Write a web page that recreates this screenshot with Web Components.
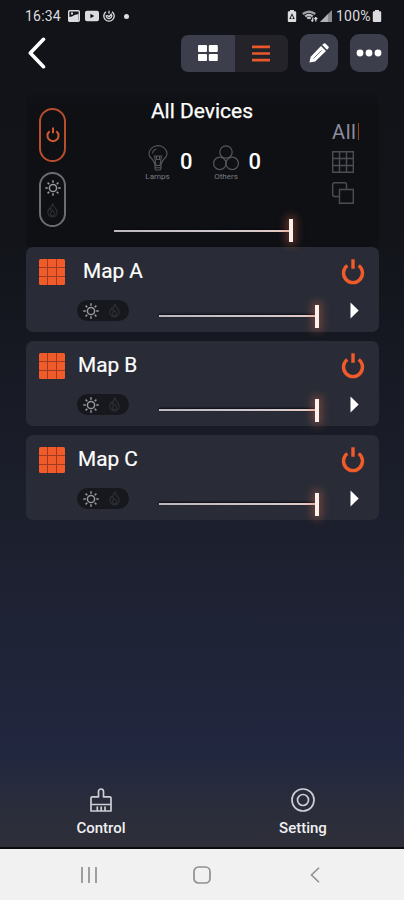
<!DOCTYPE html>
<html lang="en">
<head>
<meta charset="utf-8">
<meta name="viewport" content="width=device-width, initial-scale=1">
<title>All Devices</title>
<style>
	html, body {
		margin: 0;
		height: 100%;
	}

	body {
		overflow: hidden;
		background: #111217;
		color: #fff;
		font-family: Roboto, 'Noto Sans', sans-serif;
	}
</style>
</head>
<body>
<light-app>
	<status-bar slot="top" time="16:34" battery="100%"></status-bar>
	<tool-bar slot="top"></tool-bar>
	<device-summary lamps="0" others="0">All Devices</device-summary>
	<map-card style="--indent: 18px">Map A</map-card>
	<map-card>Map B</map-card>
	<map-card>Map C</map-card>
	<tab-bar slot="bottom">
		<tab-item icon="brush">Control</tab-item>
		<tab-item icon="target">Setting</tab-item>
	</tab-bar>
	<system-nav slot="bottom"></system-nav>
</light-app>

<script>
/**
 * Icon markup by name: [viewBox, content].
 */
const icons = {
	picture: ['0 0 12 12', '<rect x=".7" y=".7" width="10.6" height="10.6" rx="1" fill="none" stroke="currentColor" stroke-width="1.4"/><path fill="currentColor" d="M1 11V7l3-.5L6.5 5l4-1v7zM3 2.5h2v2H3z"/>'],
	video: ['0 0 14 12', '<path fill="currentColor" fill-rule="evenodd" d="M2 .8h10q2 0 2 2v6.4q0 2-2 2H2q-2 0-2-2V2.800q0-2 2-2zm3.400 3v4.400L9.300 6z"/>'],
	swirl: ['0 0 12 12', '<g fill="none" stroke="currentColor" stroke-width="1.3"><path d="M3 1.7a5.2 5.2 0 1 0 6 0"/><path d="M6 .8v3M3.3 5a2.8 2.8 0 1 0 5.4 0M4.3 5.2L6 6.8l2.8-3"/></g>'],
	recycle: ['0 0 10 12', '<path fill="currentColor" fill-rule="evenodd" d="M3 0h4v1.2h1.2q1 0 1 1V11q0 1-1 1H1.8q-1 0-1-1V2.2q0-1 1-1H3zm2 3.3L2.3 8.9h2v-1h-.6L5 5.3l1.3 2.6h-.8v1h2.2z"/>'],
	wifi: ['0 0 16 12', '<g fill="none" stroke="currentColor"><path stroke-width="2.4" opacity=".7" d="M.8 4Q7 -.6 13.2 4"/><path stroke-width="2.2" opacity=".85" d="M3.2 6.3Q7 3.4 10.7 6.3M5.2 8.5Q7 7 8.8 8.5"/><path stroke-width="1.2" d="M10.8 7.5v3.8M9.3 10l1.5 1.6M13.8 11.5V7.6M12.4 9l1.4-1.5L15.3 9"/></g>'],
	signal: ['0 0 12 12', '<path fill="currentColor" opacity=".6" d="M0 12L12 0v12z"/><path fill="currentColor" opacity=".5" d="M0 12l8-8v8z"/>'],
	battery: ['0 0 10 12', '<path fill="currentColor" d="M3 0h4v1.3h1.2q1 0 1 1V11q0 1-1 1H1.8q-1 0-1-1V2.3q0-1 1-1H3z"/>'],
	back: ['0 0 18 32', '<path fill="none" stroke="currentColor" stroke-width="3.6" stroke-linecap="round" stroke-linejoin="round" d="M15.5 2.3L2.3 16l13.2 13.7"/>'],
	tiles: ['0 0 20 16', '<g fill="currentColor"><rect width="9" height="7" rx="1"/><rect x="10.8" width="9" height="7" rx="1"/><rect y="9" width="9" height="7" rx="1"/><rect x="10.8" y="9" width="9" height="7" rx="1"/></g>'],
	list: ['0 0 18 17', '<path stroke="currentColor" stroke-width="2.7" d="M0 1.8h18M0 8.5h18M0 15.2h18"/>'],
	pencil: ['0 0 20 20', '<g fill="currentColor"><path d="M12 3l5 5L6.2 18.5.4 19.600l1.300-5.900z"/><path d="M13.200 2l1.200-1.200q1.200-1.100 2.300 0l2.500 2.500q1.100 1.100 0 2.300L18 6.800z"/></g><path stroke="#777984" stroke-width="1" d="M4.500 15.500l8.200-8.200"/>'],
	more: ['0 0 26 8', '<g fill="currentColor"><circle cx="4" cy="4" r="3.4"/><circle cx="13" cy="4" r="3.4"/><circle cx="22" cy="4" r="3.4"/></g>'],
	power: ['0 0 24 26', '<path fill="none" stroke="currentColor" stroke-width="3.4" d="M12 .3v9.5M6.3 6.5a9.5 9.5 0 1 0 11.4 0"/>'],
	sun: ['0 0 16 16', '<g fill="none" stroke="currentColor" stroke-width="1.5"><circle cx="8" cy="8" r="3.6"/><path d="M8 .3v2.5M8 13.2v2.5M.3 8h2.5M13.2 8h2.5M2.6 2.6l1.7 1.7M11.7 11.7l1.7 1.7M2.6 13.4l1.7-1.7M11.7 4.3l1.7-1.7"/></g>'],
	flame: ['0 0 12 16', '<g fill="none" stroke="currentColor" stroke-width="1.2"><path d="M6.5.9q.2 2.3 2 4.1Q11 7.3 11 10a5 5 0 0 1-10 0Q1 7 3 5.3q.2 1.6 1.3 2.2Q4 3.4 6.5.9z"/><path d="M6 8q2.3 2 2.3 3.6a2.3 2.3 0 0 1-4.6 0Q3.7 10 6 8z"/></g>'],
	bulb: ['0 0 20 26', '<g fill="none" stroke="currentColor" stroke-width="1.1"><path d="M7 20.5q0-3.5-3-6.5Q1 11.5 1 8.9a9 8.3 0 0 1 18 0q0 2.6-3 5.1-3 3-3 6.5zM7 22.7h6M7.7 25h4.6M7 20.5v3l1 1.700M13 20.500v3l-1 1.700"/><path d="M8 20l-1.500-9h7L12 20M8.500 11v3.500h3V11M4.500 8.500Q5 5 8.500 4"/></g>'],
	others: ['0 0 26 26', '<g fill="none" stroke="currentColor" stroke-width="1.2"><circle cx="13" cy="7" r="6.2"/><circle cx="6.8" cy="18.4" r="6.2"/><circle cx="19.2" cy="18.4" r="6.2"/></g>'],
	grid: ['0 0 22 22', '<path fill="none" stroke="currentColor" stroke-width="1.4" d="M.7.7h20.6v20.6H.7zM7.5.7v20.6M14.5.7v20.6M.7 7.5h20.6M.7 14.5h20.6"/>'],
	copy: ['0 0 22 22', '<path fill="none" stroke="currentColor" stroke-width="1.4" d="M7.5 14.5h-5q-1.8 0-1.8-1.8V2.5Q.7.7 2.5.7h10.2q1.8 0 1.8 1.8v5M7.5 7.5h13.8v13.8H7.5z"/>'],
	map: ['0 0 26 26', '<rect width="26" height="26" rx="1.5" fill="currentColor"/><path stroke="#9f3b22" stroke-width="1" d="M8.5 0v26M17.5 0v26M0 8.5h26M0 17.5h26"/>'],
	play: ['0 0 9 17', '<path fill="currentColor" d="M.5.5L8.7 8.5.5 16.5z"/>'],
	brush: ['0 0 22 24', '<path fill="none" stroke="currentColor" stroke-width="1.7" stroke-linejoin="round" d="M1 23V10q0-1.2 1.2-1.2h6.3V3.5a2.5 2.5 0 0 1 5 0v5.3h6.3Q21 8.8 21 10v13zM1 16.5h20M7.3 18.5V23M11.2 18.5V23M15 18.5V23"/>'],
	target: ['0 0 24 24', '<g fill="none" stroke="currentColor" stroke-width="1.7"><circle cx="12" cy="12" r="11"/><circle cx="12" cy="12" r="5.5"/></g>'],
	recents: ['0 0 16 16', '<path stroke="currentColor" stroke-width="1.7" d="M1 0v16M8 0v16M15 0v16"/>'],
	home: ['0 0 18 18', '<rect x="1" y="1" width="16" height="16" rx="4.5" fill="none" stroke="currentColor" stroke-width="1.7"/>'],
	previous: ['0 0 10 16', '<path fill="none" stroke="currentColor" stroke-width="1.6" d="M9 .7L1.5 8 9 15.3"/>']
}

/**
 * Attach an open shadow root to an element and fill it from a template.
 * @param {HTMLElement} host
 * @param {string} html
 */
function render(host, html) {
	const template = document.createElement('template')
	template.innerHTML = html
	const root = host.shadowRoot || host.attachShadow({ mode: 'open' })
	root.replaceChildren(template.content.cloneNode(true))
}

/**
 * Inline svg picked by the `name` attribute, `w` and `h` set its size.
 */
class LightIcon extends HTMLElement {
	connectedCallback() {
		const [box, content] = icons[this.getAttribute('name')]
		const [, , width, height] = box.split(' ')
		const w = this.getAttribute('w') || width
		const h = this.getAttribute('h') || height

		render(this, `
			<style>
				:host { display: block; flex: none; width: ${w}px; height: ${h}px; }
				svg { display: block; }
			</style>
			<svg width="${w}" height="${h}" viewBox="${box}">${content}</svg>
		`)
	}
}

class LightApp extends HTMLElement {
	connectedCallback() {
		render(this, `
			<style>
				:host {
					display: flex;
					flex-direction: column;
					height: 900px;
					background: linear-gradient(#121318 0, #12141a 240px, #191c27 420px, #1c202e 540px, #222740 755px, #292c3b 800px, #2e2f38 848px);
				}
				main {
					flex: 1;
					padding: 16px 25px 0 26px;
				}
			</style>
			<slot name="top"></slot>
			<main><slot></slot></main>
			<slot name="bottom"></slot>
		`)
	}
}

class StatusBar extends HTMLElement {
	connectedCallback() {
		render(this, `
			<style>
				:host {
					display: flex;
					align-items: center;
					height: 32px;
					padding: 0 22px 0 25px;
					color: #dcdcdf;
					font-size: 14px;
				}
				.time { width: 43px; letter-spacing: .2px; }
				.dot { width: 5px; height: 5px; margin-left: 9px; border-radius: 50%; background: currentColor; }
				.left, .right { display: flex; align-items: center; }
				.left { gap: 4.5px; }
				.right { margin-left: auto; }
				.percent { margin-left: 4px; width: 36px; letter-spacing: .2px; }
				.wifi { margin: 0 2px 0 5px; }
			</style>
			<div class="time">${this.getAttribute('time')}</div>
			<div class="left">
				<light-icon name="picture"></light-icon>
				<light-icon name="video"></light-icon>
				<light-icon name="swirl"></light-icon>
			</div>
			<div class="dot"></div>
			<div class="right">
				<light-icon name="recycle"></light-icon>
				<light-icon class="wifi" name="wifi"></light-icon>
				<light-icon name="signal"></light-icon>
				<div class="percent">${this.getAttribute('battery')}</div>
				<light-icon name="battery"></light-icon>
			</div>
		`)
	}
}

class ToolBar extends HTMLElement {
	connectedCallback() {
		render(this, `
			<style>
				:host {
					display: flex;
					align-items: center;
					height: 38px;
					padding: 2px 16px 0 28px;
				}
				div, button { box-sizing: border-box; display: grid; place-items: center; }
				button { padding: 0; border: 0; color: #fff; background: #3d3e4b; }
				.back { background: none; }
				.views {
					grid-template-columns: 1fr 1fr;
					width: 107px;
					height: 37px;
					margin: 0 12px 0 auto;
					border-radius: 7px;
					overflow: hidden;
				}
				.views button { width: 100%; height: 100%; }
				.views .active { color: #e8592b; background: #232329; }
				.square { width: 38px; height: 38px; border-radius: 9px; }
				.square + .square { margin-left: 12px; }
			</style>
			<button class="back"><light-icon name="back"></light-icon></button>
			<div class="views">
				<button><light-icon name="tiles"></light-icon></button>
				<button class="active"><light-icon name="list"></light-icon></button>
			</div>
			<button class="square"><light-icon name="pencil"></light-icon></button>
			<button class="square"><light-icon name="more"></light-icon></button>
		`)
	}
}

/**
 * Brightness slider, always at its maximum.
 */
class LevelSlider extends HTMLElement {
	connectedCallback() {
		render(this, `
			<style>
				:host {
					display: flex;
					align-items: center;
					height: 23px;
				}
				.track {
					flex: 1;
					height: 2px;
					background: linear-gradient(90deg, #bbb8bd, #d3c9cb 75%, #e9c9c0);
					box-shadow: 0 -1px 2px #080812;
				}
				.thumb {
					width: 4px;
					height: 23px;
					background: #fff0ec;
					box-shadow: 0 0 9px 3px rgba(220, 110, 75, .38);
				}
			</style>
			<div class="track"></div>
			<div class="thumb"></div>
		`)
	}
}

/**
 * Light/heat switch, `vertical` stacks the two icons.
 */
class ModeSwitch extends HTMLElement {
	connectedCallback() {
		render(this, `
			<style>
				:host {
					box-sizing: border-box;
					display: flex;
					align-items: center;
					justify-content: space-between;
					width: 52px;
					height: 21px;
					padding: 0 9px 0 6px;
					border-radius: 11px;
					background: #17181d;
					color: #98989f;
				}
				:host([vertical]) {
					flex-direction: column;
					width: 27px;
					height: 55px;
					padding: 6px 0 7px;
					border: 2px solid #6c6c76;
					border-radius: 14px;
					background: none;
				}
				.off { color: #2e2f35; }
			</style>
			<light-icon name="sun"></light-icon>
			<light-icon class="off" name="flame" w="11" h="15"></light-icon>
		`)
	}
}

class DeviceSummary extends HTMLElement {
	connectedCallback() {
		render(this, `
			<style>
				:host {
					box-sizing: border-box;
					display: grid;
					grid-template-columns: 27px 1fr 27px;
					height: 159px;
					padding: 3px 20px 0 13px;
					background: linear-gradient(rgba(15, 16, 20, 0), #0f1014 20px);
				}
				.modes { padding-top: 17px; }
				.power {
					box-sizing: border-box;
					display: grid;
					place-items: center;
					height: 54px;
					margin-bottom: 10px;
					border: 2px solid #b84e2d;
					border-radius: 14px;
					color: #d45a31;
				}
				.center { padding: 7px 35px 0 48px; }
				h1 {
					margin: 0 -10px 0 -17px;
					font-size: 21px;
					font-weight: 400;
					line-height: 26px;
					text-align: center;
					-webkit-text-stroke: .25px;
				}
				.counts {
					display: flex;
					gap: 20px;
					height: 40px;
					margin: 21px 0 0 30px;
				}
				.count { display: flex; gap: 9px; font-size: 22px; font-weight: 500; line-height: 34px; }
				.kind {
					display: flex;
					flex-direction: column;
					align-items: center;
					width: 27px;
					color: #55565d;
					font-size: 8px;
					font-weight: 400;
					line-height: 12px;
				}
				.kind span { color: #7c7d84; }
				level-slider { width: 179px; margin-top: 34px; }
				.filters {
					display: flex;
					flex-direction: column;
					gap: 9px;
					padding-top: 28px;
					color: #4c4d53;
				}
				.all {
					display: flex;
					justify-content: space-between;
					align-items: center;
					height: 25px;
					margin-bottom: -2px;
					color: #8d8e9e;
					font-size: 20px;
					letter-spacing: .6px;
				}
				.all i { width: 1px; height: 17px; background: #91442e; }
			</style>
			<div class="modes">
				<div class="power"><light-icon name="power" w="14" h="16"></light-icon></div>
				<mode-switch vertical></mode-switch>
			</div>
			<div class="center">
				<h1><slot></slot></h1>
				<div class="counts">
					<div class="count">
						<div class="kind"><light-icon name="bulb"></light-icon><span>Lamps</span></div>
						${this.getAttribute('lamps')}
					</div>
					<div class="count">
						<div class="kind"><light-icon name="others"></light-icon><span>Others</span></div>
						${this.getAttribute('others')}
					</div>
				</div>
				<level-slider></level-slider>
			</div>
			<div class="filters">
				<div class="all">All<i></i></div>
				<light-icon name="grid"></light-icon>
				<light-icon name="copy"></light-icon>
			</div>
		`)
	}
}

class MapCard extends HTMLElement {
	connectedCallback() {
		render(this, `
			<style>
				:host {
					box-sizing: border-box;
					display: block;
					height: 84.5px;
					margin-bottom: 9.7px;
					padding: 12px 14px 0 13px;
					border-radius: 7px;
					background: #292c36;
				}
				.head, .foot { display: flex; align-items: center; }
				.head { height: 26px; color: #f15a29; }
				h2 {
					flex: 1;
					margin: 0 0 2px var(--indent, 13px);
					color: #fff;
					font-size: 20.8px;
					font-weight: 400;
					line-height: 24px;
					-webkit-text-stroke: .2px;
				}
				.foot { margin: 14px 6px 0 38px; height: 23px; }
				level-slider { width: 161px; margin: 11px 31px 0 30px; }
			</style>
			<div class="head">
				<light-icon name="map"></light-icon>
				<h2><slot></slot></h2>
				<light-icon name="power"></light-icon>
			</div>
			<div class="foot">
				<mode-switch></mode-switch>
				<level-slider></level-slider>
				<light-icon name="play"></light-icon>
			</div>
		`)
	}
}

class TabBar extends HTMLElement {
	connectedCallback() {
		render(this, `
			<style>
				:host {
					display: flex;
					height: 59px;
					border-bottom: 2px solid #0b0b0e;
				}
				::slotted(*) { flex: 1; }
			</style>
			<slot></slot>
		`)
	}
}

class TabItem extends HTMLElement {
	connectedCallback() {
		render(this, `
			<style>
				:host {
					display: flex;
					flex-direction: column;
					align-items: center;
					gap: 6px;
					color: #f0f0f2;
					font-size: 15px;
					font-weight: 500;
					line-height: 20px;
				}
				light-icon { color: #ceced4; }
			</style>
			<light-icon name="${this.getAttribute('icon')}" h="24"></light-icon>
			<slot></slot>
		`)
	}
}

class SystemNav extends HTMLElement {
	connectedCallback() {
		render(this, `
			<style>
				:host {
					display: grid;
					grid-template-columns: repeat(3, 1fr);
					place-items: center;
					height: 51px;
					padding: 0 32px;
					background: #f1f1f1;
					color: #909090;
				}
			</style>
			<light-icon name="recents"></light-icon>
			<light-icon name="home"></light-icon>
			<light-icon name="previous"></light-icon>
		`)
	}
}

customElements.define('light-icon', LightIcon)
customElements.define('level-slider', LevelSlider)
customElements.define('mode-switch', ModeSwitch)
customElements.define('status-bar', StatusBar)
customElements.define('tool-bar', ToolBar)
customElements.define('device-summary', DeviceSummary)
customElements.define('map-card', MapCard)
customElements.define('tab-item', TabItem)
customElements.define('tab-bar', TabBar)
customElements.define('system-nav', SystemNav)
customElements.define('light-app', LightApp)
</script>
</body>
</html>
